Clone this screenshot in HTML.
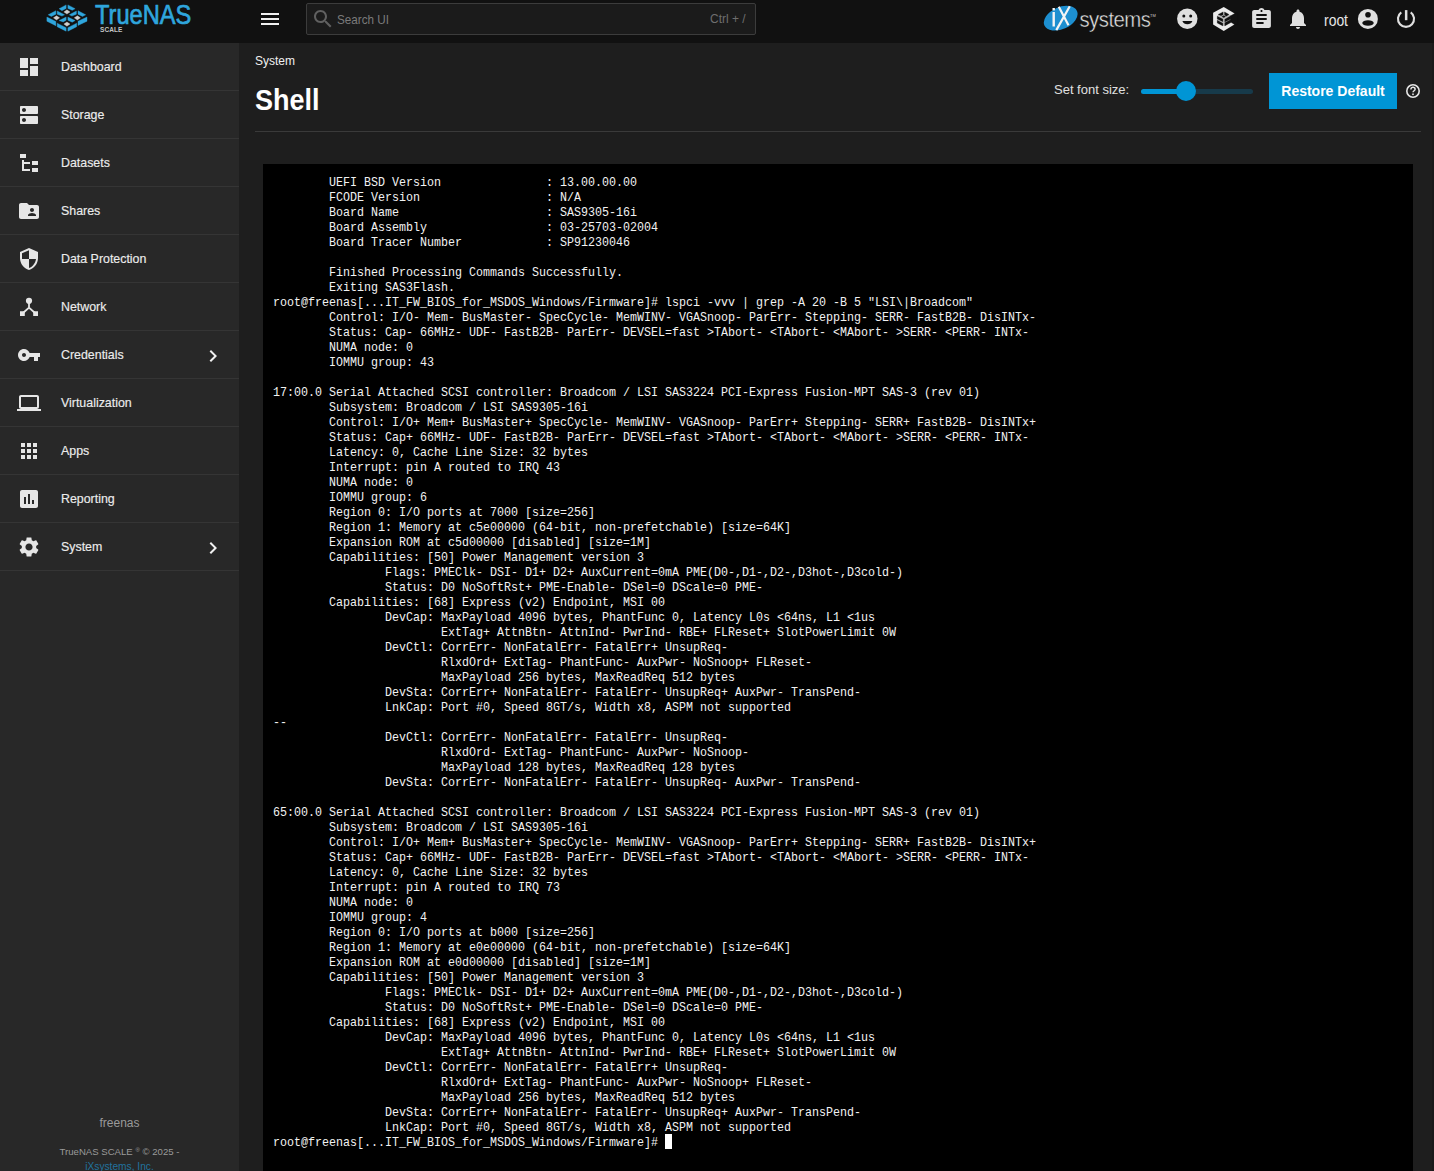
<!DOCTYPE html>
<html><head><meta charset="utf-8">
<style>
*{box-sizing:border-box;margin:0;padding:0}
html,body{width:1434px;height:1171px;overflow:hidden;background:#1e1e1e;font-family:"Liberation Sans",sans-serif;color:#fff}
.abs{position:absolute}
#top{position:absolute;left:0;top:0;width:1434px;height:43px;background:#111111}
#side{position:absolute;left:0;top:43px;width:239px;height:1128px;background:#282828}
.item{position:absolute;left:0;width:239px;height:48px;border-bottom:1px solid #353535}
.item svg{position:absolute;left:17px;top:12px;width:24px;height:24px;fill:#e6e6e6}
.item span{position:absolute;left:61px;top:17px;font-size:12.4px;line-height:14px;color:#ececec;-webkit-text-stroke:0.15px #ececec}
.item svg.chev{left:201px;top:13px;fill:#f0f0f0}
#term{position:absolute;left:263px;top:164px;width:1150px;height:1010px;background:#000}
#tx{position:absolute;left:273px;top:175px;white-space:pre;font-family:"Liberation Mono",monospace;font-size:13.5px;line-height:15px;color:#f2f2f2;transform:scaleX(0.864);transform-origin:0 0}
</style></head><body>
<div id="top">
<svg class="abs" style="left:44px;top:2px;width:46px;height:32px" viewBox="0 0 1434 998">
<g fill="#2fa6dd" stroke="#2fa6dd" stroke-width="12" stroke-linejoin="round">
<polygon points="470,210 690,90 690,200 560,270"/>
<polygon points="745,90 970,210 880,260 745,200"/>
<polygon points="130,400 370,270 370,380 230,450"/>
<polygon points="410,280 640,400 560,440 410,380"/>
<polygon points="790,400 1010,280 1010,380 870,440"/>
<polygon points="1060,270 1300,400 1200,450 1060,380"/>
<polygon points="90,470 370,610 370,740 90,600"/>
<polygon points="470,580 690,470 690,570 600,620"/>
<polygon points="745,470 970,580 880,630 745,570"/>
<polygon points="1060,600 1340,470 1340,600 1060,730"/>
<polygon points="410,660 690,800 690,910 410,770"/>
<polygon points="745,800 1020,660 1020,770 745,910"/>
</g>
<g fill="#d0d0d0" stroke="#d0d0d0" stroke-width="12" stroke-linejoin="round">
<polygon points="715,245 810,310 715,375 620,310"/>
<polygon points="390,430 485,495 390,560 295,495"/>
<polygon points="1040,430 1135,495 1040,560 945,495"/>
<polygon points="715,625 810,690 715,755 620,690"/>
</g>
</svg>
<div class="abs" style="left:95px;top:-1px;font-size:27.6px;line-height:32px;color:#2fa6dd;-webkit-text-stroke:0.7px #2fa6dd;transform:scaleX(0.856);transform-origin:0 0">TrueNAS</div>
<div class="abs" style="left:100px;top:25px;font-size:6.5px;line-height:9px;font-weight:bold;color:#c4c4c4;letter-spacing:0.1px">SCALE</div>
<div class="abs" style="left:261px;top:13px;width:18px;height:2px;background:#f2f2f2"></div>
<div class="abs" style="left:261px;top:18px;width:18px;height:2px;background:#f2f2f2"></div>
<div class="abs" style="left:261px;top:23px;width:18px;height:2px;background:#f2f2f2"></div>
<div class="abs" style="left:306px;top:3px;width:450px;height:32px;border:1px solid #3c3c3c;border-radius:2px;background:#1b1b1b"></div>
<svg class="abs" style="left:311px;top:7px;width:24px;height:24px" viewBox="0 0 24 24"><path fill="#606060" d="M15.5 14h-.79l-.28-.27C15.41 12.59 16 11.11 16 9.5 16 5.91 13.09 3 9.5 3S3 5.91 3 9.5 5.91 16 9.5 16c1.61 0 3.09-.59 4.23-1.57l.27.28v.79l5 4.99L20.49 19l-4.99-5zm-6 0C7.01 14 5 11.99 5 9.5S7.01 5 9.5 5 14 7.01 14 9.5 11.99 14 9.5 14z"/></svg>
<div class="abs" style="left:337px;top:12px;font-size:13px;line-height:16px;color:#7a7a7a;transform:scaleX(0.9);transform-origin:0 0">Search UI</div>
<div class="abs" style="left:710px;top:11px;font-size:13px;line-height:16px;color:#6e6e6e;transform:scaleX(0.92);transform-origin:0 0">Ctrl + /</div>
<svg class="abs" style="left:1042px;top:4px;width:116px;height:30px" viewBox="1042 4 116 30">
<ellipse cx="1060.7" cy="18.2" rx="17.8" ry="11" transform="rotate(-24 1060.7 18.2)" fill="#1d8fd0"/>
<rect x="1052.5" y="12" width="2.4" height="14.5" fill="#f4f4f4"/>
<rect x="1052.5" y="8" width="2.4" height="2.4" fill="#f4f4f4"/>
<path d="M1058.8 6.7L1068.5 25.3M1069.8 6.3L1056.3 30.1" stroke="#f4f4f4" stroke-width="2.2" fill="none"/>
<text x="1079.5" y="26.8" font-family="Liberation Sans" font-size="21.5" fill="#e6e6e6" stroke="#111" stroke-width="0.45" transform="translate(1079.5 0) scale(0.95 1) translate(-1079.5 0)" letter-spacing="-0.6">systems</text>
<text x="1150" y="17" font-family="Liberation Sans" font-size="4" fill="#ccc">TM</text>
</svg>
<svg class="abs" style="left:1175px;top:7px;width:24px;height:24px" viewBox="0 0 24 24">
<circle cx="12.3" cy="11.8" r="10.2" fill="#e0e0e0"/>
<circle cx="8.8" cy="9.1" r="1.5" fill="#111"/><circle cx="15.7" cy="9.1" r="1.5" fill="#111"/>
<path d="M7.4 14H17.4C16.6 16.1 14.7 17.3 12.4 17.3S8.2 16.1 7.4 14Z" fill="#111"/>
</svg>
<svg class="abs" style="left:1208px;top:4px;width:32px;height:30px" viewBox="-351 -293 1874 1757">
<polygon fill="#ececec" points="571,-120 1209,262 1194,907 571,1282 -51,907 -51,217"/>
<polygon fill="#bdbdbd" points="200,360 570,140 890,320 990,390 990,800 570,1000 190,820"/>
<g fill="#111" stroke="#111" stroke-width="14" stroke-linejoin="round">
<polygon points="1209,262 966,400 966,760 1194,907 1400,907 1400,262"/>
<polygon points="240,320 530,170 530,340 420,400"/>
<polygon points="620,170 880,320 720,420 620,350"/>
<polygon points="460,440 570,380 680,440 570,510"/>
<polygon points="190,430 520,590 520,740 190,590"/>
<polygon points="190,660 520,830 520,990 190,820"/>
<polygon points="630,600 990,400 990,580 630,760"/>
<polygon points="630,800 990,620 990,790 630,990"/>
</g>
</svg>
<svg class="abs" style="left:1249px;top:7px;width:25px;height:24px" viewBox="0 0 24 24" preserveAspectRatio="none"><path fill="#e0e0e0" d="M19 3h-4.18C14.4 1.84 13.3 1 12 1c-1.3 0-2.4.84-2.82 2H5c-1.1 0-2 .9-2 2v14c0 1.1.9 2 2 2h14c1.1 0 2-.9 2-2V5c0-1.1-.9-2-2-2zm-7 0c.55 0 1 .45 1 1s-.45 1-1 1-1-.45-1-1 .45-1 1-1zm2 14H7v-2h7v2zm3-4H7v-2h10v2zm0-4H7V7h10v2z"/></svg>
<svg class="abs" style="left:1286px;top:7px;width:24px;height:24px" viewBox="0 0 24 24"><path fill="#e0e0e0" d="M12 22c1.1 0 2-.9 2-2h-4c0 1.1.89 2 2 2zm6-6v-5c0-3.07-1.640-5.64-4.5-6.32V4c0-.83-.67-1.5-1.5-1.5s-1.5.67-1.5 1.5v.68C7.63 5.36 6 7.920 6 11v5l-2 2v1h16v-1l-2-2z"/></svg>
<div class="abs" style="left:1324px;top:11px;font-size:16px;line-height:20px;color:#e6e6e6;transform:scaleX(0.87);transform-origin:0 0">root</div>
<svg class="abs" style="left:1356px;top:7px;width:24px;height:24px" viewBox="0 0 24 24"><circle cx="11.9" cy="11.9" r="10" fill="#e0e0e0"/><circle cx="12" cy="7.7" r="2.8" fill="#111"/><ellipse cx="12" cy="16" rx="5.75" ry="2.75" fill="#111"/></svg>
<svg class="abs" style="left:1394px;top:7px;width:24px;height:24px" viewBox="0 0 24 24"><path d="M16.73 5.29A8.05 8.05 0 1 1 7.27 5.29" stroke="#e0e0e0" stroke-width="2.1" fill="none"/><rect x="10.9" y="3.1" width="2.5" height="10.1" fill="#e0e0e0"/></svg>
</div>
<div id="side">
<div class="item" style="top:0px"><svg viewBox="0 0 24 24"><path d="M3 13h8V3H3v10zm0 8h8v-6H3v6zm10 0h8V11h-8v10zm0-18v6h8V3h-8z"/></svg><span>Dashboard</span></div>
<div class="item" style="top:48px"><svg viewBox="0 0 24 24"><path d="M20 13H4c-.55 0-1 .45-1 1v6c0 .55.45 1 1 1h16c.55 0 1-.45 1-1v-6c0-.55-.45-1-1-1zM7 19c-1.1 0-2-.9-2-2s.9-2 2-2 2 .9 2 2-.9 2-2 2zM20 3H4c-.55 0-1 .45-1 1v6c0 .55.45 1 1 1h16c.55 0 1-.45 1-1V4c0-.55-.45-1-1-1zM7 9c-1.1 0-2-.9-2-2s.9-2 2-2 2 .9 2 2-.9 2-2 2z"/></svg><span>Storage</span></div>
<div class="item" style="top:96px"><svg viewBox="0 0 24 24"><path d="M3 3h6v4H3zM5 9h2v2h6v2H7v5h6v2H5zM15 10h6v4h-6zM15 17h6v4h-6z"/></svg><span>Datasets</span></div>
<div class="item" style="top:144px"><svg viewBox="0 0 24 24"><path d="M20 6h-8l-2-2H4c-1.1 0-1.99.9-1.99 2L2 18c0 1.1.9 2 2 2h16c1.1 0 2-.9 2-2V8c0-1.1-.9-2-2-2zm-5 3c1.1 0 2 .9 2 2s-.9 2-2 2-2-.9-2-2 .9-2 2-2zm4 8h-8v-1c0-1.33 2.67-2 4-2s4 .67 4 2v1z"/></svg><span>Shares</span></div>
<div class="item" style="top:192px"><svg viewBox="0 0 24 24"><path d="M12 1L3 5v6c0 5.55 3.84 10.74 9 12 5.16-1.26 9-6.45 9-12V5l-9-4zm0 10.99h7c-.53 4.12-3.28 7.79-7 8.94V12H5V6.3l7-3.11v8.8z"/></svg><span>Data Protection</span></div>
<div class="item" style="top:240px"><svg viewBox="0 0 24 24"><circle cx="12" cy="5.8" r="3.1"/><path d="M12 8v4.6L6 18M12 12.6L18 18" stroke="#e6e6e6" stroke-width="1.8" fill="none"/><path d="M3 16.3h4.8V21H3zM16.2 16.3H21V21h-4.8z"/></svg><span>Network</span></div>
<div class="item" style="top:288px"><svg viewBox="0 0 24 24"><path d="M12.65 10C11.83 7.67 9.61 6 7 6c-3.31 0-6 2.69-6 6s2.69 6 6 6c2.61 0 4.83-1.670 5.65-4H17v4h4v-4h2v-4H12.65zM7 14c-1.1 0-2-.9-2-2s.9-2 2-2 2 .9 2 2-.9 2-2 2z"/></svg><span>Credentials</span><svg class="chev" viewBox="0 0 24 24"><path d="M10 6L8.59 7.41 13.17 12l-4.58 4.59L10 18l6-6z"/></svg></div>
<div class="item" style="top:336px"><svg viewBox="0 0 24 24"><path d="M20 18c1.1 0 1.99-.9 1.99-2L22 6c0-1.1-.9-2-2-2H4c-1.1 0-2 .9-2 2v10c0 1.1.9 2 2 2H0v2h24v-2h-4zM4 6h16v10H4V6z"/></svg><span>Virtualization</span></div>
<div class="item" style="top:384px"><svg viewBox="0 0 24 24"><path d="M4 8h4V4H4v4zm6 12h4v-4h-4v4zm-6 0h4v-4H4v4zm0-6h4v-4H4v4zm6 0h4v-4h-4v4zm6-10v4h4V4h-4zm-6 4h4V4h-4v4zm6 6h4v-4h-4v4zm0 6h4v-4h-4v4z"/></svg><span>Apps</span></div>
<div class="item" style="top:432px"><svg viewBox="0 0 24 24"><path d="M19 3H5c-1.1 0-2 .9-2 2v14c0 1.1.9 2 2 2h14c1.1 0 2-.9 2-2V5c0-1.1-.9-2-2-2zM9 17H7v-7h2v7zm4 0h-2V7h2v10zm4 0h-2v-4h2v4z"/></svg><span>Reporting</span></div>
<div class="item" style="top:480px"><svg viewBox="0 0 24 24"><path d="M19.14 12.94c.04-.3.06-.61.06-.94 0-.32-.02-.64-.07-.94l2.03-1.58c.18-.14.23-.41.12-.61l-1.92-3.32c-.12-.22-.37-.29-.59-.22l-2.39.96c-.5-.38-1.03-.7-1.62-.94l-.36-2.54c-.04-.24-.24-.41-.48-.41h-3.84c-.24 0-.43.17-.47.41l-.36 2.54c-.59.24-1.13.57-1.62.94l-2.39-.96c-.22-.08-.47 0-.59.22L2.74 8.87c-.12.21-.08.47.12.61l2.03 1.58c-.05.3-.09.63-.09.94s.02.64.07.94l-2.03 1.58c-.18.14-.23.41-.12.61l1.92 3.32c.12.22.37.29.59.22l2.39-.96c.5.38 1.03.7 1.62.94l.36 2.54c.05.24.24.41.48.41h3.84c.24 0 .44-.17.47-.41l.36-2.54c.59-.24 1.13-.56 1.62-.94l2.39.96c.22.08.47 0 .59-.22l1.92-3.32c.12-.22.07-.47-.12-.61l-2.01-1.58zM12 15.6c-1.98 0-3.6-1.62-3.6-3.6s1.62-3.6 3.6-3.6 3.6 1.62 3.6 3.6-1.62 3.6-3.6 3.6z"/></svg><span>System</span><svg class="chev" viewBox="0 0 24 24"><path d="M10 6L8.59 7.41 13.17 12l-4.58 4.59L10 18l6-6z"/></svg></div>
<div class="abs" style="left:0;top:1073px;width:239px;text-align:center;font-size:12px;line-height:14px;color:#9a9a9a">freenas</div>
<div class="abs" style="left:0;top:1101px;width:239px;text-align:center;font-size:9.6px;line-height:12px;color:#9a9a9a">TrueNAS SCALE <span style="font-size:6px;vertical-align:3px">®</span> © 2025 -</div>
<div class="abs" style="left:0;top:1118px;width:239px;text-align:center;font-size:10.2px;line-height:12px;color:#22729e">iXsystems, Inc.</div>
</div>
<div class="abs" style="left:255px;top:54px;font-size:12px;line-height:14px;color:#f0f0f0">System</div>
<div class="abs" style="left:255px;top:83px;font-size:30px;line-height:34px;font-weight:bold;color:#fff;transform:scaleX(0.9);transform-origin:0 0">Shell</div>
<div class="abs" style="left:255px;top:131px;width:1166px;height:1px;background:#3a3a3a"></div>
<div class="abs" style="left:1054px;top:82px;font-size:13px;line-height:16px;color:#e0e0e0">Set font size:</div>
<div class="abs" style="left:1141px;top:88.5px;width:112px;height:5px;border-radius:3px;background:#173a4a"></div>
<div class="abs" style="left:1141px;top:88.5px;width:50px;height:5px;border-radius:3px 0 0 3px;background:#0095d5"></div>
<div class="abs" style="left:1176px;top:81px;width:20px;height:20px;border-radius:50%;background:#0095d5"></div>
<div class="abs" style="left:1269px;top:73px;width:128px;height:36px;background:#0095d5;color:#fff;font-weight:bold;font-size:14px;line-height:36px;text-align:center">Restore Default</div>
<svg class="abs" style="left:1405px;top:83px;width:16px;height:16px" viewBox="0 0 16 16"><circle cx="8" cy="8" r="6.2" stroke="#e6e6e6" stroke-width="1.6" fill="none"/><path d="M5.9 6.4c0-1.25.9-2.15 2.1-2.15s2.1.85 2.1 2c0 1.5-2.05 1.5-2.05 3.1" stroke="#e6e6e6" stroke-width="1.5" fill="none"/><rect x="7.2" y="10.5" width="1.6" height="1.6" fill="#e6e6e6"/></svg>
<div id="term"></div>
<div class="abs" style="left:665px;top:1134px;width:7px;height:15px;background:#fff"></div>
<div class="abs" style="left:1432px;top:43px;width:2px;height:1128px;background:#1a1a1a"></div>
<div id="tx">        UEFI BSD Version               : 13.00.00.00
        FCODE Version                  : N/A
        Board Name                     : SAS9305-16i
        Board Assembly                 : 03-25703-02004
        Board Tracer Number            : SP91230046

        Finished Processing Commands Successfully.
        Exiting SAS3Flash.
root@freenas[...IT_FW_BIOS_for_MSDOS_Windows/Firmware]# lspci -vvv | grep -A 20 -B 5 "LSI\|Broadcom"
        Control: I/O- Mem- BusMaster- SpecCycle- MemWINV- VGASnoop- ParErr- Stepping- SERR- FastB2B- DisINTx-
        Status: Cap- 66MHz- UDF- FastB2B- ParErr- DEVSEL=fast &gt;TAbort- &lt;TAbort- &lt;MAbort- &gt;SERR- &lt;PERR- INTx-
        NUMA node: 0
        IOMMU group: 43

17:00.0 Serial Attached SCSI controller: Broadcom / LSI SAS3224 PCI-Express Fusion-MPT SAS-3 (rev 01)
        Subsystem: Broadcom / LSI SAS9305-16i
        Control: I/O+ Mem+ BusMaster+ SpecCycle- MemWINV- VGASnoop- ParErr+ Stepping- SERR+ FastB2B- DisINTx+
        Status: Cap+ 66MHz- UDF- FastB2B- ParErr- DEVSEL=fast &gt;TAbort- &lt;TAbort- &lt;MAbort- &gt;SERR- &lt;PERR- INTx-
        Latency: 0, Cache Line Size: 32 bytes
        Interrupt: pin A routed to IRQ 43
        NUMA node: 0
        IOMMU group: 6
        Region 0: I/O ports at 7000 [size=256]
        Region 1: Memory at c5e00000 (64-bit, non-prefetchable) [size=64K]
        Expansion ROM at c5d00000 [disabled] [size=1M]
        Capabilities: [50] Power Management version 3
                Flags: PMEClk- DSI- D1+ D2+ AuxCurrent=0mA PME(D0-,D1-,D2-,D3hot-,D3cold-)
                Status: D0 NoSoftRst+ PME-Enable- DSel=0 DScale=0 PME-
        Capabilities: [68] Express (v2) Endpoint, MSI 00
                DevCap: MaxPayload 4096 bytes, PhantFunc 0, Latency L0s &lt;64ns, L1 &lt;1us
                        ExtTag+ AttnBtn- AttnInd- PwrInd- RBE+ FLReset+ SlotPowerLimit 0W
                DevCtl: CorrErr- NonFatalErr- FatalErr+ UnsupReq-
                        RlxdOrd+ ExtTag- PhantFunc- AuxPwr- NoSnoop+ FLReset-
                        MaxPayload 256 bytes, MaxReadReq 512 bytes
                DevSta: CorrErr+ NonFatalErr- FatalErr- UnsupReq+ AuxPwr- TransPend-
                LnkCap: Port #0, Speed 8GT/s, Width x8, ASPM not supported
--
                DevCtl: CorrErr- NonFatalErr- FatalErr- UnsupReq-
                        RlxdOrd- ExtTag- PhantFunc- AuxPwr- NoSnoop-
                        MaxPayload 128 bytes, MaxReadReq 128 bytes
                DevSta: CorrErr- NonFatalErr- FatalErr- UnsupReq- AuxPwr- TransPend-

65:00.0 Serial Attached SCSI controller: Broadcom / LSI SAS3224 PCI-Express Fusion-MPT SAS-3 (rev 01)
        Subsystem: Broadcom / LSI SAS9305-16i
        Control: I/O+ Mem+ BusMaster+ SpecCycle- MemWINV- VGASnoop- ParErr+ Stepping- SERR+ FastB2B- DisINTx+
        Status: Cap+ 66MHz- UDF- FastB2B- ParErr- DEVSEL=fast &gt;TAbort- &lt;TAbort- &lt;MAbort- &gt;SERR- &lt;PERR- INTx-
        Latency: 0, Cache Line Size: 32 bytes
        Interrupt: pin A routed to IRQ 73
        NUMA node: 0
        IOMMU group: 4
        Region 0: I/O ports at b000 [size=256]
        Region 1: Memory at e0e00000 (64-bit, non-prefetchable) [size=64K]
        Expansion ROM at e0d00000 [disabled] [size=1M]
        Capabilities: [50] Power Management version 3
                Flags: PMEClk- DSI- D1+ D2+ AuxCurrent=0mA PME(D0-,D1-,D2-,D3hot-,D3cold-)
                Status: D0 NoSoftRst+ PME-Enable- DSel=0 DScale=0 PME-
        Capabilities: [68] Express (v2) Endpoint, MSI 00
                DevCap: MaxPayload 4096 bytes, PhantFunc 0, Latency L0s &lt;64ns, L1 &lt;1us
                        ExtTag+ AttnBtn- AttnInd- PwrInd- RBE+ FLReset+ SlotPowerLimit 0W
                DevCtl: CorrErr- NonFatalErr- FatalErr+ UnsupReq-
                        RlxdOrd+ ExtTag- PhantFunc- AuxPwr- NoSnoop+ FLReset-
                        MaxPayload 256 bytes, MaxReadReq 512 bytes
                DevSta: CorrErr+ NonFatalErr- FatalErr- UnsupReq+ AuxPwr- TransPend-
                LnkCap: Port #0, Speed 8GT/s, Width x8, ASPM not supported
root@freenas[...IT_FW_BIOS_for_MSDOS_Windows/Firmware]# </div>
</body></html>
